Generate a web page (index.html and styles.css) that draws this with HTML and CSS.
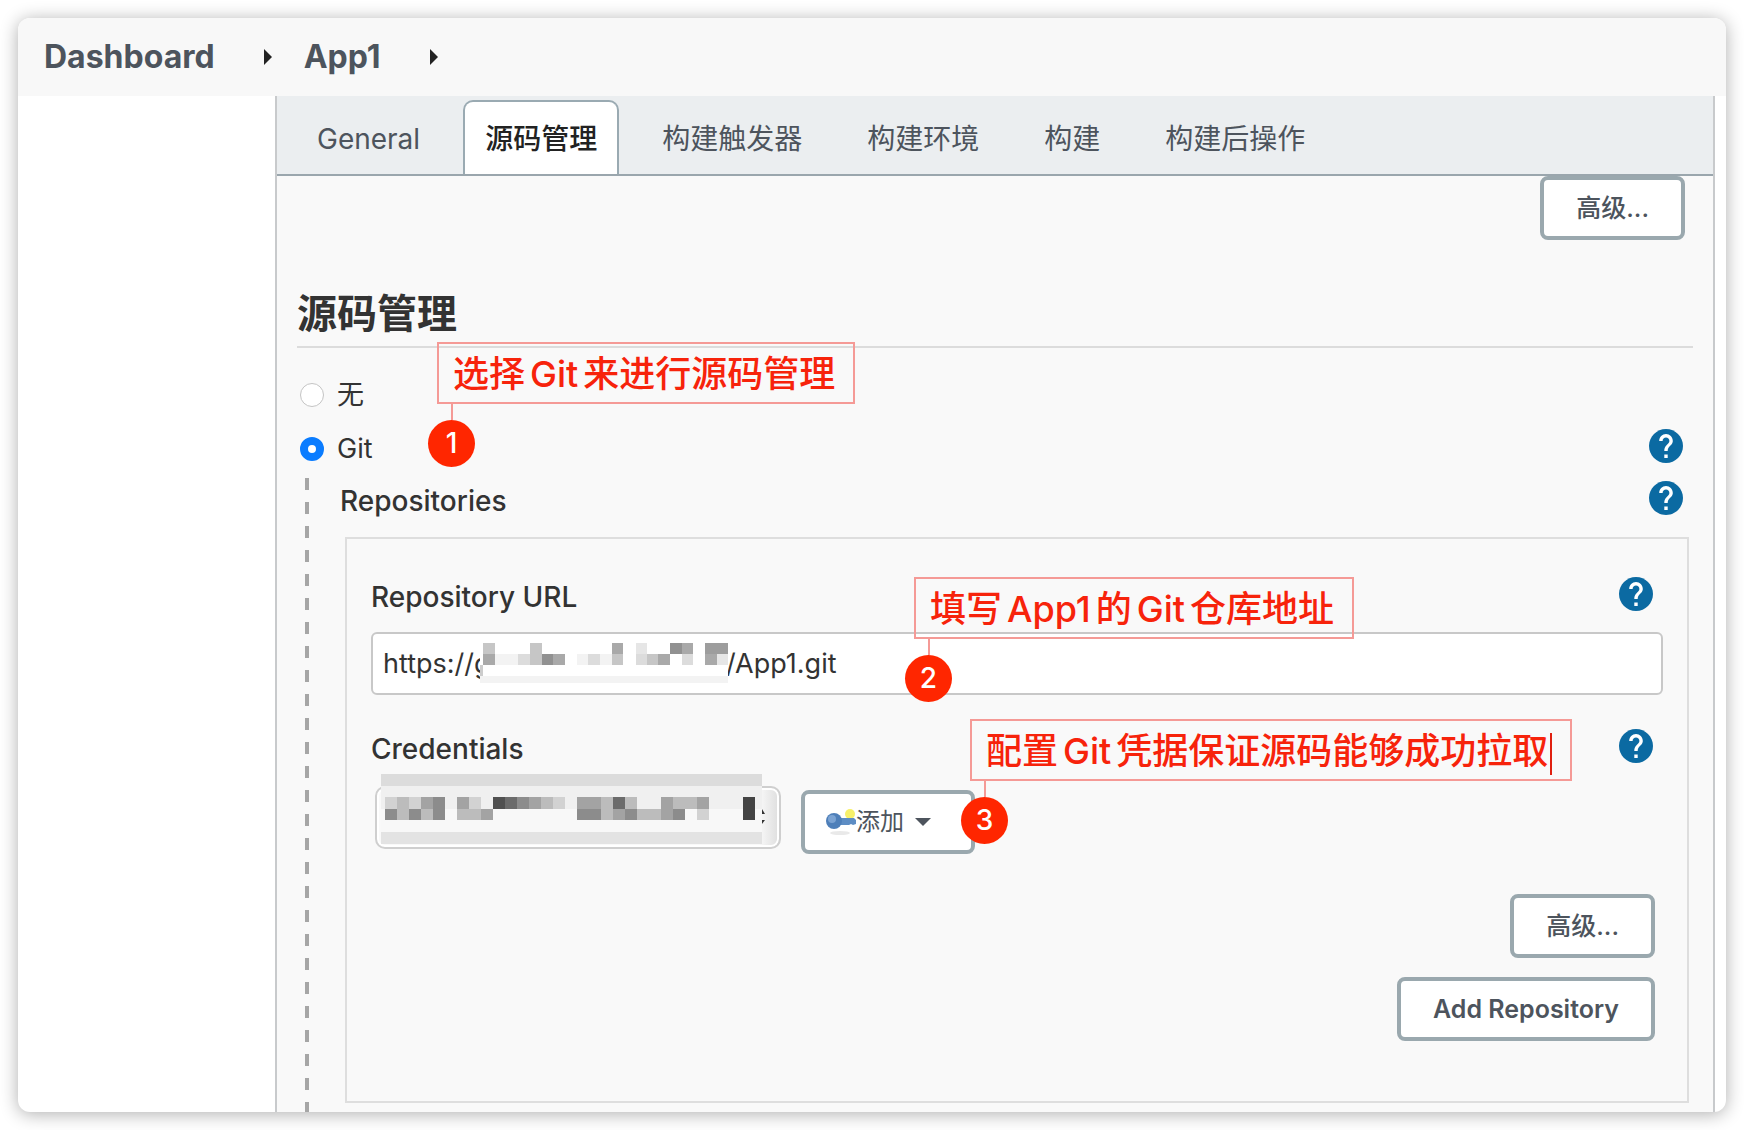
FILE: index.html
```html
<!DOCTYPE html>
<html lang="zh-CN">
<head>
<meta charset="utf-8">
<meta name="viewport" content="width=device-width, initial-scale=1">
<title>App1 Config</title>
<link rel="stylesheet" href="styles.css">
</head>
<body>
<svg class="defs" width="0" height="0" aria-hidden="true">
  <symbol id="help" viewBox="2 2 20 20">
    <path fill="currentColor" d="M12 2C6.480 2 2 6.480 2 12s4.480 10 10 10 10-4.480 10-10S17.520 2 12 2z"/>
    <path fill="#fff" d="M13 19h-2v-2h2v2zm2.070-7.750l-.9.920C13.450 12.900 13 13.500 13 15h-2v-.5c0-1.100.45-2.100 1.170-2.830l1.240-1.260c.37-.36.59-.86.59-1.410 0-1.100-.9-2-2-2s-2 .9-2 2H8c0-2.210 1.790-4 4-4s4 1.790 4 4c0 .88-.36 1.680-.93 2.250z"/>
  </symbol>
</svg>
<div class="window">
  <nav class="breadcrumb" aria-label="Breadcrumb">
    <a href="#dashboard">Dashboard</a>
    <svg class="arrow" viewBox="0 0 8 16" aria-hidden="true"><path d="M0 0l8 8-8 8z"/></svg>
    <a href="#app1">App1</a>
    <svg class="arrow" viewBox="0 0 8 16" aria-hidden="true"><path d="M0 0l8 8-8 8z"/></svg>
  </nav>
  <div class="layout">
    <aside class="sidebar"></aside>
    <main class="panel">
      <nav class="tabs" aria-label="Sections">
        <a class="tab" href="#general">General</a>
        <a class="tab tab-active" href="#scm" aria-current="true">源码管理</a>
        <a class="tab" href="#triggers">构建触发器</a>
        <a class="tab" href="#env">构建环境</a>
        <a class="tab" href="#build">构建</a>
        <a class="tab" href="#post">构建后操作</a>
      </nav>
      <form class="config">
        <div class="actions"><button class="btn btn-more" type="button">高级...</button></div>
        <h2 class="section-title" id="scm">源码管理</h2>
        <div class="choices">
          <div class="choice">
            <input type="radio" name="scm" id="scm-none"><label for="scm-none">无</label>
          </div>
          <div class="choice">
            <input type="radio" name="scm" id="scm-git" checked><label for="scm-git">Git</label>
            <button class="help" type="button" aria-label="Help: Git"><svg><use href="#help"/></svg></button>
            <div class="note note-scm"><p class="note-text">选择<span class="latin">Git</span>来进行源码管理</p><span class="note-num">1</span></div>
          </div>
        </div>
        <div class="git-body">
          <div class="row">
            <span>Repositories</span>
            <button class="help" type="button" aria-label="Help: Repositories"><svg><use href="#help"/></svg></button>
          </div>
          <div class="repo">
            <div class="row">
              <label for="url">Repository URL</label>
              <button class="help" type="button" aria-label="Help: Repository URL"><svg><use href="#help"/></svg></button>
              <div class="note note-url"><p class="note-text">填写<span class="latin">App1</span>的<span class="latin">Git</span>仓库地址</p><span class="note-num">2</span></div>
            </div>
            <div class="url-field">
              <input class="url" id="url" type="text" value="https://g&nbsp;&nbsp;&nbsp;&nbsp;&nbsp;&nbsp;&nbsp;&nbsp;&nbsp;&nbsp;&nbsp;&nbsp;&nbsp;&nbsp;&nbsp;&nbsp;&nbsp;&nbsp;&nbsp;&nbsp;&nbsp;&nbsp;&nbsp;&nbsp;&nbsp;&nbsp;&nbsp;&nbsp;&nbsp;&nbsp;&nbsp;/App1.git">
              <svg class="url-mask" viewBox="0 0 744 120" preserveAspectRatio="none" shape-rendering="crispEdges" aria-hidden="true">
                <path fill="#fff" d="M0 0h744v98H0z"/><path fill="#f3f3f3" d="M0 98h744v22H0z"/>
                <path fill="#ccc" d="M0 66h10v32H0z"/>
                <g fill="#c6c6c6"><path d="M10 0h35v33H10zM150 0h35v65h-35zM395 33h35v32h-35zM500 33h35v32h-35z"/></g>
                <g fill="#a9a9a9"><path d="M10 33h35v32H10zM220 33h35v32h-35zM395 0h35v33h-35zM535 33h35v32h-35zM605 0h35v33h-35zM675 33h35v32h-35z"/></g>
                <g fill="#919191"><path d="M185 33h35v32h-35zM570 0h35v33h-35z"/></g>
                <path fill="#9d9d9d" d="M675 0h69v33h-69z"/>
                <g fill="#dcdcdc"><path d="M115 33h35v32h-35zM325 33h35v32h-35zM467 33h33v32h-33zM605 33h35v32h-35z"/></g>
                <g fill="#e6e6e6"><path d="M467 0h33v33h-33zM710 33h34v32h-34z"/></g>
                <g fill="#f3f3f3"><path d="M45 33h70v32H45zM290 33h35v32h-35zM360 33h35v32h-35z"/></g>
              </svg>
            </div>
            <div class="row row-cred">
              <label for="cred">Credentials</label>
              <button class="help" type="button" aria-label="Help: Credentials"><svg><use href="#help"/></svg></button>
              <div class="note note-cred"><p class="note-text note-editing">配置<span class="latin">Git</span>凭据保证源码能够成功拉取</p><span class="note-num">3</span></div>
            </div>
            <div class="cred-row">
              <div class="cred-field">
                <select class="cred" id="cred"><option></option></select>
                <svg class="cred-mask" viewBox="0 0 386 70" aria-hidden="true">
                  <path fill="#f0f0f0" d="M0 12h381v46H0z"/><path fill="#f8f8f8" d="M0 35h381v23H0z"/>
                  <path fill="#dcdcdc" d="M0 0h381v12H0z"/><path fill="#e3e3e3" d="M0 58h381v12H0z"/>
                  <g shape-rendering="crispEdges">
                  <g fill="#d2d2d2"><path d="M4 23h12v12H4zM28 23h12v12H28zM88 23h12v12H88zM172 23h12v12h-12zM316 35h12v11h-12z"/></g>
                  <g fill="#bcbcbc"><path d="M16 23h12v23H16zM40 35h12v11H40zM76 35h24v11H76zM160 23h12v12h-12zM220 23h12v23h-12zM244 23h12v12h-12zM256 35h24v11h-24zM292 23h24v12h-24z"/></g>
                  <g fill="#a3a3a3"><path d="M40 23h12v12H40zM76 23h12v12H76zM100 35h12v11h-12zM148 23h12v12h-12zM196 23h24v12h-24zM232 35h12v11h-12zM280 23h12v23h-12zM316 23h12v12h-12z"/></g>
                  <g fill="#8c8c8c"><path d="M4 35h12v11H4zM28 35h12v11H28zM52 23h12v23H52zM136 23h12v12h-12zM196 35h24v11h-24zM244 35h12v11h-12zM292 35h12v11h-12z"/></g>
                  <path fill="#6b6b6b" d="M124 23h12v12h-12zM232 23h12v12h-12z"/>
                  <path fill="#505050" d="M112 23h12v12h-12z"/><path fill="#444" d="M362 23h12v23h-12z"/>
                  </g>
                  <path fill="#333" d="M381 35l3 5h-3zM381 46h3l-3 4z"/>
                </svg>
              </div>
              <button class="btn btn-add" type="button">
                <svg class="key" viewBox="0 0 30 28" aria-hidden="true">
                  <ellipse cx="14" cy="25" rx="10" ry="2" fill="#e9e9e9"/>
                  <circle cx="24" cy="6" r="5" fill="#f7f06a"/>
                  <path d="M10 10h18l2 2v4l-3 1-2-1-2 1H10z" fill="#5d8dc4"/>
                  <circle cx="8" cy="13" r="8" fill="#4e7fb9"/>
                  <circle cx="6" cy="11" r="4" fill="#7ba3d3"/>
                </svg><span>添加</span>
                <svg class="caret" viewBox="0 0 16 8" aria-hidden="true"><path d="M0 0h16L8 8z"/></svg>
              </button>
            </div>
            <div class="repo-actions">
              <button class="btn btn-more" type="button">高级...</button>
              <button class="btn" type="button">Add Repository</button>
            </div>
          </div>
        </div>
      </form>
    </main>
  </div>
</div>
</body>
</html>
```
FILE: styles.css
```css
* { box-sizing: border-box; }

body {
  margin: 0;
  padding: 18px;
  background: #fff;
  color: #333;
  font: 27px/32px Inter, "Noto Sans CJK SC", sans-serif;
}

.defs { display: block; position: absolute; }

.window {
  display: flex;
  flex-direction: column;
  min-height: calc(100vh - 36px);
  border-radius: 12px;
  overflow: hidden;
  background: #fff;
  box-shadow: 0 2px 18px rgba(0, 0, 0, 0.32);
}

.breadcrumb {
  display: flex;
  align-items: center;
  height: 78px;
  padding: 0 26px;
  background: #f8f8f8;
}
.breadcrumb a {
  color: #4d545d;
  font-size: 32px;
  font-weight: 700;
  text-decoration: none;
}
.arrow { width: 8px; height: 16px; margin: 0 32px 0 49px; fill: #222; }

.layout { display: flex; flex: 1; padding-right: 11px; }
.sidebar { flex: 0 0 257px; }
.panel {
  flex: 1;
  display: flex;
  flex-direction: column;
  min-width: 0;
  border: solid #c8cacc;
  border-width: 0 2px;
  background: #f9f9f9;
}

.tabs {
  display: flex;
  align-items: flex-end;
  gap: 21px;
  height: 80px;
  padding: 0 18px;
  border-bottom: 2px solid #9aa6ad;
  background: #ebeef0;
}
.tab {
  height: 74px;
  padding: 0 20px;
  border: 2px solid transparent;
  border-bottom: 0;
  border-radius: 10px 10px 0 0;
  color: #4d545d;
  font-size: 28px;
  line-height: 74px;
  text-decoration: none;
  white-space: nowrap;
}
.tab-active { border-color: #9aaab2; background: #fff; color: #222; font-weight: 500; }

.config { display: flex; flex-direction: column; flex: 1; padding: 0 20px; }
.actions { display: flex; justify-content: flex-end; padding-right: 8px; }

.btn {
  height: 64px;
  padding: 0 32px;
  border: 4px solid #9aa8ae;
  border-radius: 8px;
  background: #fff;
  color: #4d545d;
  font: 600 25px/32px Inter, "Noto Sans CJK SC", sans-serif;
}
.btn-more { font-weight: 500; }

.section-title {
  margin: 42px 0 20px;
  border-bottom: 2px solid #dcdcdc;
  font-size: 40px;
  font-weight: 700;
  line-height: 64px;
}

.choice { position: relative; display: flex; align-items: center; height: 54px; }
.choice input {
  appearance: none;
  width: 24px;
  height: 24px;
  margin: 0 13px 0 3px;
  border: 1px solid #c4c4c4;
  border-radius: 50%;
  background: #fff;
}
.choice input:checked { border: 8px solid #0a7cff; }

.help {
  width: 34px;
  height: 34px;
  margin: 0 10px 6px auto;
  padding: 0;
  border: 0;
  background: none;
  color: #0b6aa2;
}
.help svg { display: block; width: 34px; height: 34px; }

.git-body {
  flex: 1;
  margin: 2px 0 0 8px;
  padding: 0 0 9px 35px;
  background: repeating-linear-gradient(#a6a6a6 0 12px, transparent 12px 24px) 0 0 / 4px 100% no-repeat;
}
.row {
  position: relative;
  display: flex;
  align-items: center;
  height: 46px;
  font-size: 28px;
  font-weight: 500;
}

.repo {
  margin: 13px 4px 0 5px;
  padding: 35px 24px 60px;
  border: 2px solid #dedede;
}
.url-field { position: relative; margin: 12px 0 31px; }
.url {
  display: block;
  width: 100%;
  height: 63px;
  padding: 0 10px;
  border: 2px solid #c8c8c8;
  border-radius: 6px;
  background: #fff;
  color: #333;
  font: inherit;
}
.url-mask { position: absolute; left: 109px; top: 11px; width: 248px; height: 40px; }

.cred-row { display: flex; align-items: flex-start; gap: 20px; margin: 14px 0 40px 4px; }
.cred-field { position: relative; flex: 0 0 406px; }
.cred {
  appearance: none;
  display: block;
  width: 100%;
  height: 63px;
  border: 2px solid #cfcfcf;
  border-radius: 10px;
  background: linear-gradient(90deg, #f9f9f9 95%, #dedede);
  box-shadow: inset 0 0 0 2px #fff;
}
.cred-mask { position: absolute; left: 6px; top: -12px; width: 386px; height: 70px; }
.btn-add {
  display: flex;
  align-items: center;
  width: 174px;
  margin-top: 4px;
  padding: 0 21px;
  font-size: 24px;
  font-weight: 400;
}
.key { width: 30px; height: 28px; }
.caret { width: 16px; height: 8px; margin-left: 11px; fill: #4d545d; }

.repo-actions { display: flex; flex-direction: column; align-items: flex-end; gap: 19px; padding-right: 8px; }

/* Numbered callouts lie over the form */
.note { position: absolute; z-index: 2; color: #f7230b; font-weight: 500; }
.note-scm { left: 140px; top: -80px; }
.note-url { left: 543px; top: 3px; }
.note-cred { left: 599px; top: -7px; }
.note-text {
  margin: 0;
  padding: 2px 18px 0 14px;
  border: 2px solid #f59a96;
  font-size: 36px;
  line-height: 56px;
  white-space: nowrap;
}
.latin { margin: 0 5px; }
.note-editing::after {
  content: "";
  display: inline-block;
  width: 2px;
  height: 42px;
  margin-left: 2px;
  background: #e02010;
  vertical-align: middle;
}
.note-num {
  position: absolute;
  left: -9px;
  top: 78px;
  width: 47px;
  height: 47px;
  border-radius: 50%;
  background: #ff2600;
  color: #fff;
  font-size: 28px;
  line-height: 47px;
  text-align: center;
}
.note-num::before {
  content: "";
  position: absolute;
  left: 23px;
  top: -16px;
  width: 2px;
  height: 16px;
  background: #f59a96;
}
```
